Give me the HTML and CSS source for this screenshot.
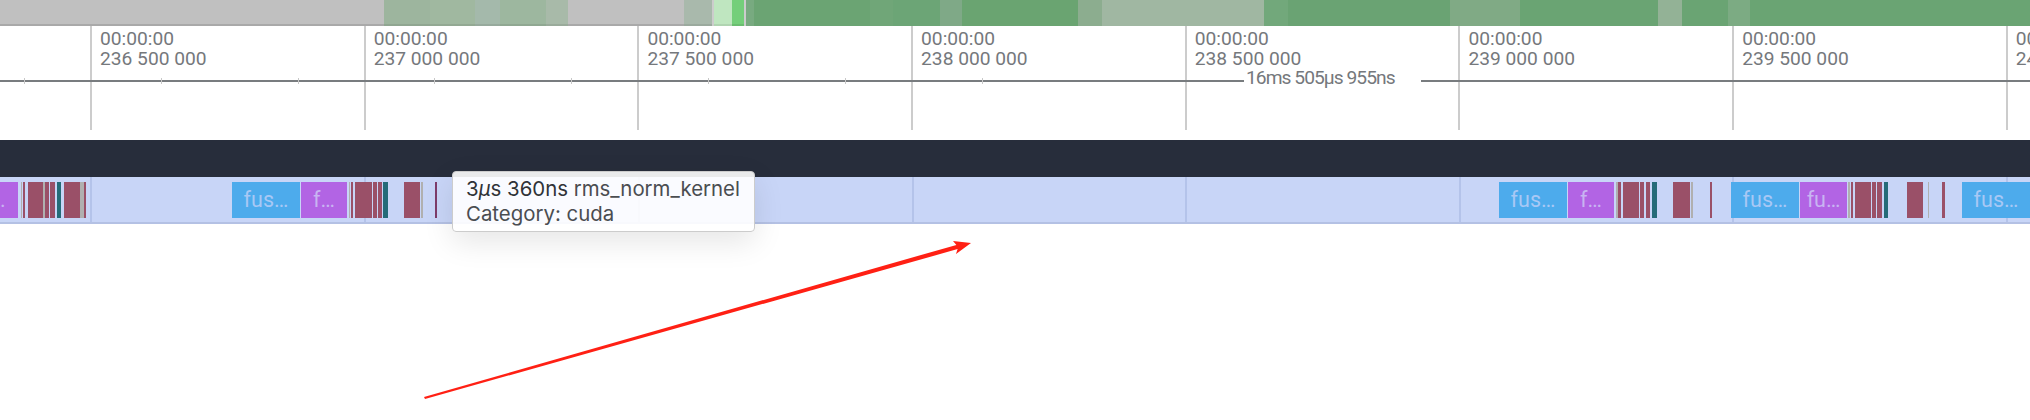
FILE: index.html
```html
<!DOCTYPE html>
<html lang="en">
<head>
    <meta charset="UTF-8">
    <title>Timeline</title>
    <link rel="stylesheet" href="styles.css">
</head>
<body>
    <div class="page-wrapper">
        <!-- Overview strip, segment colour is the load in that span -->
        <div class="overview">
            <div class="seg seg-idle" style="width:384px"></div>
            <div class="seg seg-pale" style="width:46px;background:#9db59e"></div>
            <div class="seg seg-pale" style="width:45px;background:#a0b8a0"></div>
            <div class="seg seg-pale" style="width:25px;background:#a4b9ab"></div>
            <div class="seg seg-pale" style="width:46px;background:#9db79f"></div>
            <div class="seg seg-pale" style="width:22px;background:#a8baa9"></div>
            <div class="seg seg-idle" style="width:116px"></div>
            <div class="seg seg-pale" style="width:28px;background:#a9b9ac"></div>
            <div class="seg" style="width:2px;background:#cccccc"></div>
            <div class="seg seg-pale" style="width:18px;background:#bfe6c0"></div>
            <div class="seg seg-pale" style="width:12px;background:#74cf7a"></div>
            <div class="seg" style="width:2px;background:#cccccc"></div>
            <div class="seg" style="width:8px;background:#78aa80"></div>
            <div class="seg" style="width:116px;background:#6ba473"></div>
            <div class="seg" style="width:23px;background:#70a678"></div>
            <div class="seg" style="width:47px;background:#6ca576"></div>
            <div class="seg" style="width:22px;background:#7fa987"></div>
            <div class="seg" style="width:116px;background:#6aa471"></div>
            <div class="seg" style="width:24px;background:#8cad8f"></div>
            <div class="seg" style="width:162px;background:#a0b7a2"></div>
            <div class="seg" style="width:24px;background:#72a87b"></div>
            <div class="seg" style="width:162px;background:#6aa373"></div>
            <div class="seg" style="width:70px;background:#80aa85"></div>
            <div class="seg" style="width:138px;background:#6aa473"></div>
            <div class="seg" style="width:24px;background:#93b296"></div>
            <div class="seg" style="width:46px;background:#6aa473"></div>
            <div class="seg" style="width:22px;background:#7cab83"></div>
            <div class="seg" style="width:280px;background:#6aa473"></div>
        </div>

        <!-- Time ruler -->
        <div class="ruler">
            <div class="tick"><span>00:00:00</span><span>236 500 000</span></div>
            <div class="tick"><span>00:00:00</span><span>237 000 000</span></div>
            <div class="tick"><span>00:00:00</span><span>237 500 000</span></div>
            <div class="tick"><span>00:00:00</span><span>238 000 000</span></div>
            <div class="tick"><span>00:00:00</span><span>238 500 000</span></div>
            <div class="tick"><span>00:00:00</span><span>239 000 000</span></div>
            <div class="tick"><span>00:00:00</span><span>239 500 000</span></div>
            <div class="tick"><span>00:00:00</span><span>240 000 000</span></div>

            <div class="span-line">
                <div class="span-rule">
                    <i style="left:24px"></i>
                    <i style="left:161px"></i>
                    <i style="left:298px"></i>
                    <i style="left:434px"></i>
                    <i style="left:571px"></i>
                    <i style="left:708px"></i>
                    <i style="left:845px"></i>
                    <i style="left:982px"></i>
                </div>
                <div class="span-label">16ms 505μs 955ns</div>
                <div class="span-rule span-rule-end"></div>
            </div>
        </div>

        <div class="track-header"></div>

        <!-- Slices sit at their time on the track -->
        <div class="track">
            <div class="grid-line" style="left:90px"></div>
            <div class="grid-line" style="left:364px"></div>
            <div class="grid-line" style="left:638px"></div>
            <div class="grid-line" style="left:912px"></div>
            <div class="grid-line" style="left:1185px"></div>
            <div class="grid-line" style="left:1459px"></div>
            <div class="grid-line" style="left:1732px"></div>
            <div class="grid-line" style="left:2006px"></div>

            <div class="slice purple" style="left:-52px;width:70px">fus…</div>
            <div class="slice grey" style="left:21px;width:1px"></div>
            <div class="slice red" style="left:23px;width:2px"></div>
            <div class="slice red" style="left:28px;width:15px"></div>
            <div class="slice grey" style="left:43px;width:2px"></div>
            <div class="slice red" style="left:45px;width:4px"></div>
            <div class="slice red" style="left:50px;width:5px"></div>
            <div class="slice teal" style="left:57px;width:4px"></div>
            <div class="slice red" style="left:64px;width:16px"></div>
            <div class="slice grey" style="left:80px;width:4px"></div>
            <div class="slice red" style="left:84px;width:2px"></div>

            <div class="slice blue" style="left:232px;width:68px">fus…</div>
            <div class="slice purple" style="left:301px;width:46px">f…</div>
            <div class="slice grey" style="left:349px;width:1px"></div>
            <div class="slice red" style="left:351px;width:2px"></div>
            <div class="slice red" style="left:355px;width:17px"></div>
            <div class="slice red" style="left:373px;width:4px"></div>
            <div class="slice red" style="left:378px;width:4px"></div>
            <div class="slice teal" style="left:383px;width:5px"></div>
            <div class="slice red" style="left:404px;width:16px"></div>
            <div class="slice grey" style="left:421px;width:2px"></div>
            <div class="slice wine" style="left:435px;width:2px"></div>

            <div class="slice blue" style="left:1499px;width:68px">fus…</div>
            <div class="slice purple" style="left:1568px;width:46px">f…</div>
            <div class="slice grey" style="left:1616px;width:2px"></div>
            <div class="slice red" style="left:1618px;width:3px"></div>
            <div class="slice red" style="left:1623px;width:16px"></div>
            <div class="slice red" style="left:1640px;width:4px"></div>
            <div class="slice red" style="left:1646px;width:4px"></div>
            <div class="slice teal" style="left:1652px;width:5px"></div>
            <div class="slice red" style="left:1673px;width:17px"></div>
            <div class="slice grey" style="left:1691px;width:2px"></div>
            <div class="slice red" style="left:1710px;width:2px"></div>

            <div class="slice blue" style="left:1731px;width:68px">fus…</div>
            <div class="slice purple" style="left:1800px;width:47px">fu…</div>
            <div class="slice grey" style="left:1848px;width:2px"></div>
            <div class="slice red" style="left:1851px;width:2px"></div>
            <div class="slice red" style="left:1855px;width:16px"></div>
            <div class="slice red" style="left:1872px;width:4px"></div>
            <div class="slice red" style="left:1877px;width:5px"></div>
            <div class="slice teal" style="left:1884px;width:4px"></div>
            <div class="slice red" style="left:1907px;width:16px"></div>
            <div class="slice grey" style="left:1928px;width:1px"></div>
            <div class="slice red" style="left:1942px;width:3px"></div>
            <div class="slice blue" style="left:1962px;width:68px">fus…</div>
        </div>

        <div class="tooltip">
            <div><span class="tooltip-time">3<i>μ</i>s 360ns</span> rms_norm_kernel</div>
            <div>Category: cuda</div>
        </div>

        <!-- Annotation arrow drawn on top of the screenshot -->
        <svg class="arrow" width="2030" height="420" viewBox="0 0 2030 420">
            <path d="M424 397 L956.4 244.9 L953 241 L971 243 L956 254 L957.6 249.1 L425 399 Z" fill="#ff2014"/>
        </svg>
    </div>
</body>
</html>
```

FILE: styles.css
```css
/* Timeline viewer */
body {
    font-family: 'Roboto', sans-serif;
    margin: 0;
    padding: 0;
    background: #fff;
    color: #75787c;
    overflow: hidden;
}

.page-wrapper {
    position: relative;
    width: 2030px;
    height: 420px;
    overflow: hidden;
}

.overview {
    display: flex;
    height: 26px;
}

.seg {
    flex-shrink: 0;
    height: 100%;
}

.seg-idle {
    background: #c0c0c0;
    box-shadow: inset 0 -2px #a9a9a9;
}

.seg-pale {
    box-shadow: inset 0 -2px rgba(0, 0, 0, 0.08);
}

.ruler {
    position: relative;
    display: flex;
    height: 104px;
    padding-left: 90px;
    font-size: 19.2px;
    line-height: 20px;
}

.tick {
    flex: 0 0 273.7px;
    box-sizing: border-box;
    display: flex;
    flex-direction: column;
    padding: 3px 0 0 8px;
    border-left: 2px solid #ccc;
    white-space: nowrap;
}

.span-line {
    position: absolute;
    top: 43px;
    left: 0;
    right: 0;
    display: flex;
    align-items: center;
    height: 24px;
}

.span-rule {
    position: relative;
    flex: 0 0 1244px;
    height: 2px;
    background: #787c7f;
}

.span-rule i {
    position: absolute;
    top: -2px;
    width: 1px;
    height: 6px;
    background: #c8c8c8;
}

.span-rule-end {
    flex: 1;
}

.span-label {
    flex: 0 0 177px;
    box-sizing: border-box;
    padding: 0 0 6px 2px;
    letter-spacing: -0.95px;
    white-space: nowrap;
}

.track-header {
    height: 37px;
    margin-top: 10px;
    background: #272d3b;
}

.track {
    position: relative;
    height: 45px;
    background: #c8d5f7;
    border-bottom: 2px solid #b4c1e4;
    overflow: hidden;
}

.grid-line {
    position: absolute;
    top: 0;
    bottom: 0;
    width: 2px;
    background: #b4c3ea;
}

.slice {
    position: absolute;
    top: 5px;
    height: 36px;
    overflow: hidden;
    font-size: 21.5px;
    line-height: 36px;
    text-align: center;
    white-space: nowrap;
}

.blue {
    background: #4dabec;
    color: #a8c8f5;
}

.purple {
    background: #b264e4;
    color: #c8b4f2;
}

.red {
    background: #9a5068;
}

.wine {
    background: #7d3c6a;
}

.teal {
    background: #256b78;
}

.grey {
    background: #b0b0b0;
}

.tooltip {
    position: absolute;
    top: 171px;
    left: 452px;
    box-sizing: border-box;
    width: 303px;
    height: 61px;
    padding: 4px 13px 0;
    background: rgba(255, 255, 255, 0.9);
    border: 1px solid #ccc;
    border-radius: 4px;
    box-shadow: 0 10px 30px rgba(0, 0, 0, 0.1);
    font-family: 'Inter', sans-serif;
    font-size: 20.4px;
    line-height: 25px;
    color: #4a4d51;
    white-space: nowrap;
}

.tooltip-time {
    color: #303337;
}

.arrow {
    position: absolute;
    top: 0;
    left: 0;
    pointer-events: none;
}
```
